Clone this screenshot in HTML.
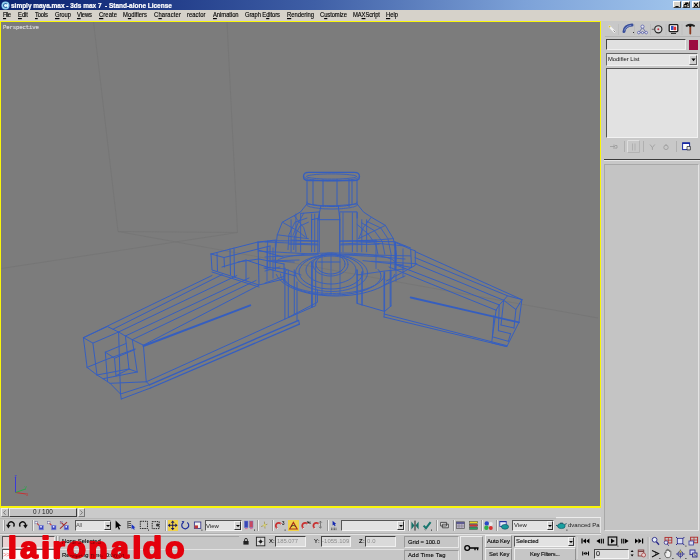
<!DOCTYPE html>
<html>
<head>
<meta charset="utf-8">
<title>simply maya.max - 3ds max 7 - Stand-alone License</title>
<style>
html,body{margin:0;padding:0;}
body{width:700px;height:560px;overflow:hidden;position:relative;background:#c6c6c6;font-family:"Liberation Sans",sans-serif;font-size:7px;color:#000;}
.a{position:absolute;}
.t{position:absolute;white-space:nowrap;line-height:1;will-change:transform;}
#title{left:0;top:0;width:700px;height:9.5px;background:linear-gradient(90deg,#0c2470 0%,#1a3482 18%,#3f5fa6 45%,#7da2d8 75%,#a4c8ee 100%);}
#title .t{color:#fff;-webkit-text-stroke:0.2px #fff;font-weight:bold;font-size:7.6px;left:11px;top:1px;}
#menu{left:0;top:9.5px;width:700px;height:11.5px;background:#d6d2ca;}
#menu .t{color:#000;transform:scaleY(1.16);transform-origin:0 84%;-webkit-text-stroke:0.12px #000;}
#menu u{text-decoration-thickness:0.6px;text-underline-offset:0.6px;}
#vp{left:0;top:20.5px;width:601px;height:487px;background:#faf60a;}
#vpi{left:1.3px;top:1.4px;width:598.3px;height:484.3px;background:#7c7c7c;}
.sunk{box-sizing:border-box;border:1px solid;border-color:#555 #f4f4f4 #f4f4f4 #555;background:#e2e2e2;}
.btn{box-sizing:border-box;border:1px solid;border-color:#f0f0f0 #666 #666 #f0f0f0;background:#c6c6c6;}
.wb{box-sizing:border-box;background:#d6d2ca;border:0.6px solid;border-color:#fff #404040 #404040 #fff;}
.dd{background:#e2e2e2;border-color:#555 #f4f4f4 #f4f4f4 #555;}
.ddb{background:#d2d2d2;border-width:0.6px;border-color:#f4f4f4 #333 #333 #f4f4f4;}
.ddb::after{content:"";position:absolute;left:0.8px;top:2.8px;border:2.1px solid transparent;border-top:2.4px solid #000;border-bottom:0;}
.s1{font-size:6.3px;color:#000;-webkit-text-stroke:0.1px #000;}
.s2{font-size:6px;color:#8c8c8c;}
#ff+.s2{color:#222;-webkit-text-stroke:0.15px #222;}
.cf{background:#dadada;border-color:#444 #f0f0f0 #f0f0f0 #444;}
.sep{position:absolute;width:1px;background:#9a9a9a;box-shadow:1px 0 0 #eee;}
</style>
</head>
<body>
<!-- title bar -->
<div id="title" class="a">
  <svg class="a" style="left:1px;top:0.5px" width="9" height="9" viewBox="0 0 9 9"><circle cx="4.5" cy="4.5" r="4" fill="#8fd0f0"/><circle cx="4.5" cy="4.5" r="2.6" fill="#e8f6ff"/><path d="M6 3.2A2 2 0 1 0 6 5.8" stroke="#2a6aa8" stroke-width="1.1" fill="none"/></svg>
  <span class="t" style="left:11.0px;top:2.5px;font-size:6.50px;letter-spacing:-0.02px;">simply maya.max - 3ds max 7&nbsp; - Stand-alone License</span>
  <div class="a wb" style="left:673px;top:1.2px;width:8.4px;height:7.2px"></div>
  <div class="a wb" style="left:681.6px;top:1.2px;width:8.4px;height:7.2px"></div>
  <div class="a wb" style="left:691.8px;top:1.2px;width:8.2px;height:7.2px"></div>
  <svg class="a" style="left:673px;top:0" width="27" height="10" viewBox="673 0 27 10"><path d="M675.4 6.6h3.2" stroke="#000" stroke-width="1.1"/><path d="M685.2 3.4h3v2.6M684 4.6h2.8v2.4h-2.8z" stroke="#000" stroke-width="0.9" fill="none"/><path d="M684 4.5h2.8M685.2 3.2h3" stroke="#000" stroke-width="1.2"/><path d="M694.2 2.8l3.6 4M697.8 2.8l-3.6 4" stroke="#000" stroke-width="1.1"/></svg>
</div>
<!-- menu bar -->
<div id="menu" class="a">
  <span class="t" style="left:3.0px;top:3.2px;font-size:5.85px;letter-spacing:-0.48px;"><u>F</u>ile</span>
  <span class="t" style="left:18.0px;top:3.2px;font-size:5.85px;letter-spacing:-0.03px;"><u>E</u>dit</span>
  <span class="t" style="left:35.0px;top:3.2px;font-size:5.85px;letter-spacing:-0.17px;"><u>T</u>ools</span>
  <span class="t" style="left:55.0px;top:3.2px;font-size:5.85px;letter-spacing:-0.07px;"><u>G</u>roup</span>
  <span class="t" style="left:77.0px;top:3.2px;font-size:5.85px;letter-spacing:-0.13px;"><u>V</u>iews</span>
  <span class="t" style="left:99.0px;top:3.2px;font-size:5.85px;letter-spacing:0.09px;"><u>C</u>reate</span>
  <span class="t" style="left:123.0px;top:3.2px;font-size:5.85px;letter-spacing:0.03px;">M<u>o</u>difiers</span>
  <span class="t" style="left:154.0px;top:3.2px;font-size:5.85px;letter-spacing:0.16px;">C<u>h</u>aracter</span>
  <span class="t" style="left:187.0px;top:3.2px;font-size:5.85px;letter-spacing:0.05px;">reactor</span>
  <span class="t" style="left:213.0px;top:3.2px;font-size:5.85px;letter-spacing:-0.05px;"><u>A</u>nimation</span>
  <span class="t" style="left:245.0px;top:3.2px;font-size:5.85px;letter-spacing:-0.09px;">Graph E<u>d</u>itors</span>
  <span class="t" style="left:287.0px;top:3.2px;font-size:5.85px;"><u>R</u>endering</span>
  <span class="t" style="left:320.0px;top:3.2px;font-size:5.85px;letter-spacing:-0.08px;">C<u>u</u>stomize</span>
  <span class="t" style="left:353.0px;top:3.2px;font-size:5.85px;letter-spacing:-0.08px;">MA<u>X</u>Script</span>
  <span class="t" style="left:386.0px;top:3.2px;font-size:5.85px;letter-spacing:-0.02px;"><u>H</u>elp</span>
</div>
<!-- viewport -->
<div id="vp" class="a"><div id="vpi" class="a"></div></div>
<span class="t" style="left:3.0px;top:25.2px;font-size:5.70px;letter-spacing:-0.16px;font-family:'Liberation Mono',monospace;color:#dcdcdc;-webkit-text-stroke:0.15px #dcdcdc">Perspective</span>
<svg id="wire" class="a" style="left:0;top:0" width="700" height="560" viewBox="0 0 700 560">
<g stroke="#727272" stroke-width="0.7" fill="none" opacity="0.9">
<path d="M93.5 22L118 231.5M227 22L237.5 232.5M118 231.5L598 318M237.5 232.5L1.5 268.5M118 231.5L237.5 232.5"/>
</g>
<g fill="none" stroke="#2a5acc" stroke-linecap="round" stroke-linejoin="round" opacity="0.85">
<path d="M83.4 337.7 L107.4 326.5 L118.6 332.0 L92.9 343.1 L83.4 337.7M118.6 332.0 L125.4 336.0 L132.3 339.7 L143.4 345.2M83.4 337.7 L87.1 367.4M92.9 343.1 L97.0 375.0M87.1 367.4 L97.0 375.0 L103.0 378.7 L110.0 383.3 L120.5 394.0 L121.3 399.0M143.4 345.2 L146.3 381.8 L149.4 384.8M120.5 394.0 L149.4 384.8M121.3 399.0 L150.5 388.0M118.6 332.0 L120.5 394.0M125.4 336.0 L129.0 369.0M132.3 339.7 L137.2 372.0M105.3 352.2 L114.5 358.2 L116.0 375.7M105.3 352.2 L107.6 381.8M114.5 358.2 L135.0 349.5M105.3 352.2 L126.0 343.5M87.1 367.4 L105.0 360.0 L135.0 349.0M97.0 375.0 L129.0 369.0M103.0 378.7 L137.2 372.0M110.0 383.3 L146.3 381.8M129.0 369.0 L137.2 372.0M116.0 375.7 L129.0 369.0M83.4 337.7 L212.0 275.5M113.0 329.2 L222.3 274.5M118.6 332.0 L236.8 275.6M125.4 336.0 L249.0 278.0M132.3 339.7 L256.0 280.5M143.4 345.2 L258.7 285.4M298.6 320.3 L299.4 324.2M146.3 381.8 L284.9 319.1M297.0 282.0 L297.0 320.3M211.0 254.0 L212.0 270.0 L259.0 285.0 L258.0 242.0 L211.0 254.0M212.0 272.0 L259.0 287.0M258.0 242.0 L276.0 240.0M217.0 252.5 L217.5 271.0M230.0 249.0 L230.5 275.0M234.0 248.0 L234.5 276.5M222.0 267.0 L246.0 260.0 L270.0 268.0M238.0 262.0 L259.0 259.0M246.0 260.0 L246.0 281.0M259.0 259.0 L284.0 264.0M211.0 254.0 L224.0 257.5 L270.0 246.0M224.0 257.5 L224.5 267.0M259.0 285.0 L284.0 279.0M258.0 242.0 L258.0 250.0 L283.0 257.0M284.9 268.0 L284.9 319.1 L315.7 305.7 L315.7 262.0M288.3 270.0 L288.3 317.4 L317.4 302.3 L317.4 290.0M312.3 262.0 L312.3 307.0M357.0 270.0 L357.0 303.4 L384.6 311.4 L384.6 272.0M362.0 272.0 L362.0 305.0M391.0 270.0 L391.0 306.0M384.6 311.4 L391.0 306.0M384.0 314.0 L507.0 345.7M384.0 317.0 L506.8 346.6M384.6 311.4 L384.0 317.0M395.5 242.5 L410.7 249.3 L415.3 250.8 L415.3 265.2 L411.5 267.5 L410.7 249.3M411.5 267.5 L386.4 281.0M395.5 242.5 L395.5 264.5M395.5 264.5 L411.5 267.5M415.3 251.6 L521.9 299.6M415.0 257.6 L507.5 295.8M415.0 263.7 L503.7 300.3M395.5 264.5 L400.0 266.5 L499.2 304.9M389.0 267.0 L496.1 310.2M521.9 299.6 L507.5 295.8 L503.7 300.3 L499.2 304.9 L496.1 310.2M521.9 299.6 L518.9 322.4 L506.8 346.6 L491.6 342.8 L496.1 310.2M492.4 336.8 L508.3 341.3M498.4 330.7 L510.6 333.7M501.0 325.0 L514.0 328.0M499.2 304.9 L498.4 330.7M503.7 300.3 L501.0 325.0M515.9 309.5 L514.0 328.0M503.7 300.3 L515.9 309.5 L521.9 299.6M510.6 333.7 L508.3 341.3M494.0 315.7 L492.4 336.8M307.0 179.5 L307.0 204.0M313.0 179.5 L313.0 204.0M323.0 179.5 L323.0 206.5M337.0 179.5 L337.0 206.5M349.0 179.5 L349.0 206.5M352.0 179.5 L352.0 204.0M357.0 179.5 L357.0 204.0M357.0 202.0 L356.9 202.4 L356.7 202.7 L356.3 203.1 L355.8 203.4 L355.1 203.7 L354.3 204.0 L353.3 204.4 L352.2 204.6 L351.0 204.9 L349.7 205.2 L348.2 205.4 L346.7 205.6 L345.1 205.8 L343.3 206.0 L341.6 206.2 L339.7 206.3 L337.8 206.4 L335.9 206.4 L334.0 206.5 L332.0 206.5 L330.0 206.5 L328.1 206.4 L326.2 206.4 L324.3 206.3 L322.4 206.2 L320.7 206.0 L318.9 205.8 L317.3 205.6 L315.8 205.4 L314.3 205.2 L313.0 204.9 L311.8 204.6 L310.7 204.4 L309.7 204.0 L308.9 203.7 L308.2 203.4 L307.7 203.1 L307.3 202.7 L307.1 202.4 L307.0 202.0M357.1 204.0 L363.4 211.9 L371.3 217.2 L385.4 225.4 L393.3 238.6 L396.4 254.3 L395.5 270.0M306.9 204.0 L300.6 211.9 L293.7 215.9 L282.3 222.2 L277.3 234.8 L275.4 251.1 L275.4 270.0M300.6 213.4 L319.4 211.9 L319.4 218.1 L311.6 219.7M339.8 211.9 L357.1 211.9 L357.1 218.1M291.1 240.1 L317.9 241.1M339.8 241.1 L376.0 240.1M258.1 242.3 L275.4 240.8 L317.9 241.1M339.8 241.1 L394.8 241.7 L410.6 248.0M321.0 205.6 L317.9 219.7 L317.9 254.3M338.3 205.6 L339.8 219.7 L339.8 254.3M317.9 219.7 L339.8 219.7M345.0 264.0 L344.8 265.6 L344.3 267.1 L343.4 268.5 L342.2 269.9 L340.8 271.1 L339.0 272.1 L337.1 272.9 L335.0 273.5 L332.8 273.9 L330.5 274.0 L328.2 273.9 L326.0 273.5 L323.9 272.9 L322.0 272.1 L320.2 271.1 L318.8 269.9 L317.6 268.5 L316.7 267.1 L316.2 265.6 L316.0 264.0 L316.2 262.4 L316.7 260.9 L317.6 259.5 L318.8 258.1 L320.2 256.9 L322.0 255.9 L323.9 255.1 L326.0 254.5 L328.2 254.1 L330.5 254.0 L332.8 254.1 L335.0 254.5 L337.1 255.1 L339.0 255.9 L340.8 256.9 L342.2 258.1 L343.4 259.5 L344.3 260.9 L344.8 262.4 L345.0 264.0M363.0 272.0 L362.6 274.7 L361.4 277.3 L359.5 279.7 L356.9 282.0 L353.6 284.0 L349.8 285.8 L345.5 287.1 L340.9 288.2 L336.0 288.8 L331.0 289.0 L326.0 288.8 L321.1 288.2 L316.5 287.1 L312.2 285.8 L308.4 284.0 L305.1 282.0 L302.5 279.7 L300.6 277.3 L299.4 274.7 L299.0 272.0 L299.4 269.3 L300.6 266.7 L302.5 264.3 L305.1 262.0 L308.4 260.0 L312.2 258.2 L316.5 256.9 L321.1 255.8 L326.0 255.2 L331.0 255.0 L336.0 255.2 L340.9 255.8 L345.5 256.9 L349.8 258.2 L353.6 260.0 L356.9 262.0 L359.5 264.3 L361.4 266.7 L362.6 269.3 L363.0 272.0M378.1 269.5 L379.5 271.2 L380.4 273.0 L380.9 274.8 L381.0 276.7 L380.6 278.5 L379.8 280.3 L378.5 282.0 L376.8 283.7 L374.7 285.4 L372.2 286.9 L369.4 288.3 L366.2 289.7 L362.7 290.9 L358.9 291.9 L354.9 292.9 L350.7 293.6 L346.3 294.2 L341.8 294.7 L337.1 294.9 L332.5 295.0 L327.9 294.9 L323.2 294.7 L318.7 294.2 L314.3 293.6 L310.1 292.9 L306.1 291.9 L302.3 290.9 L298.8 289.7 L295.6 288.3 L292.8 286.9 L290.3 285.4 L288.2 283.7 L286.5 282.0 L285.2 280.3 L284.4 278.5 L284.0 276.7 L284.1 274.8 L284.6 273.0 L285.5 271.2 L286.9 269.5M394.6 274.5 L393.7 276.3 L392.6 278.0 L391.1 279.7 L389.4 281.4 L387.5 283.0 L385.2 284.5 L382.8 286.0 L380.1 287.4 L377.2 288.7 L374.1 289.9 L370.8 291.0 L367.3 292.0 L363.7 293.0 L359.9 293.8 L356.0 294.4 L352.0 295.0 L348.0 295.4 L343.9 295.7 L339.7 295.9 L335.5 296.0 L331.3 295.9 L327.1 295.7 L323.0 295.4 L319.0 295.0 L315.0 294.4 L311.1 293.8 L307.3 293.0 L303.7 292.0 L300.2 291.0 L296.9 289.9 L293.8 288.7 L290.9 287.4 L288.2 286.0 L285.8 284.5 L283.5 283.0 L281.6 281.4 L279.9 279.7 L278.4 278.0 L277.3 276.3 L276.4 274.5M284.0 264.0 L284.0 282.0M264.0 268.0 L296.0 276.0M270.0 246.0 L270.0 268.0M317.9 262.0 L339.9 262.0M294.3 270.0 L294.3 314.0M311.6 262.0 L311.6 307.0M357.2 270.0 L357.2 303.4M362.0 272.0 L362.0 305.0M384.0 272.0 L384.0 311.0M390.2 270.0 L390.2 306.0" stroke-width="1.0"/>
<path d="M143.4 346.0 L250.2 305.3M410.7 297.5 L518.9 322.4" stroke-width="1.9"/>
<path d="M149.4 384.8 L298.6 320.3M150.5 388.0 L299.4 324.2M308.5 172.3H354.5Q359.5 172.3 359.5 176.4Q359.5 180.5 354.5 180.5H308.5Q303.5 180.5 303.5 176.4Q303.5 172.3 308.5 172.3Z" stroke-width="1.3"/>
<path d="M356.5 176.5 L356.2 176.9 L355.3 177.3 L353.8 177.7 L351.7 178.0 L349.2 178.3 L346.2 178.6 L342.8 178.8 L339.2 179.0 L335.4 179.1 L331.5 179.1 L327.6 179.1 L323.8 179.0 L320.2 178.8 L316.8 178.6 L313.8 178.3 L311.3 178.0 L309.2 177.7 L307.7 177.3 L306.8 176.9 L306.5 176.5 L306.8 176.1 L307.7 175.7 L309.2 175.3 L311.3 175.0 L313.8 174.7 L316.8 174.4 L320.2 174.2 L323.8 174.0 L327.6 173.9 L331.5 173.9 L335.4 173.9 L339.2 174.0 L342.8 174.2 L346.2 174.4 L349.2 174.7 L351.7 175.0 L353.8 175.3 L355.3 175.7 L356.2 176.1 L356.5 176.5M357.5 204.5 L357.4 204.9 L357.2 205.2 L356.8 205.6 L356.3 205.9 L355.6 206.2 L354.7 206.5 L353.7 206.9 L352.6 207.1 L351.4 207.4 L350.0 207.7 L348.6 207.9 L347.0 208.1 L345.3 208.3 L343.6 208.5 L341.8 208.7 L339.9 208.8 L338.0 208.9 L336.0 208.9 L334.0 209.0 L332.0 209.0 L330.0 209.0 L328.0 208.9 L326.0 208.9 L324.1 208.8 L322.2 208.7 L320.4 208.5 L318.7 208.3 L317.0 208.1 L315.4 207.9 L314.0 207.7 L312.6 207.4 L311.4 207.1 L310.3 206.9 L309.3 206.5 L308.4 206.2 L307.7 205.9 L307.2 205.6 L306.8 205.2 L306.6 204.9 L306.5 204.5M366.6 221.3 L380.7 227.9 L387.9 238.6 L391.1 254.3 L390.4 268.4M361.8 222.9 L374.4 230.7 L382.3 241.7 L384.8 254.3M357.1 224.4 L368.1 233.9 L376.0 244.9 L377.9 254.3M306.9 218.1 L294.9 222.2 L288.9 234.8 L288.0 249.6M308.4 222.2 L299.9 226.0 L294.3 237.0 L293.7 249.6M303.7 213.4 L298.1 222.9 L293.0 235.4M294.3 215.9 L303.7 227.6 L306.9 238.6M282.3 222.2 L297.4 230.7 L305.3 237.0M277.3 234.8 L294.3 237.0 L308.4 238.6M371.3 217.2 L363.4 227.6 L358.7 238.6M385.4 225.4 L371.3 232.3 L358.7 238.6M393.3 238.6 L376.0 240.1 L358.7 241.1M291.1 219.7 L291.1 251.8M295.9 214.1 L295.9 251.8M300.6 214.1 L300.6 251.8M311.6 214.1 L311.6 251.8M314.7 214.1 L314.7 251.8M319.4 214.1 L319.4 251.8M339.8 212.8 L339.8 251.8M343.0 212.8 L343.0 251.8M352.4 212.8 L352.4 251.8M357.1 212.8 L357.1 251.8M361.8 219.7 L361.8 251.8M366.6 219.7 L366.6 251.8M311.6 219.7 L311.6 238.6M288.9 244.2 L317.9 244.9M339.8 244.9 L379.1 244.2M267.6 241.1 L267.6 268.4M275.4 240.8 L275.4 270.0M376.0 240.1 L376.0 268.4M394.8 241.7 L394.8 270.0M258.1 251.1 L317.9 254.3M339.8 254.3 L410.6 255.9M267.6 260.6 L294.3 262.1M371.3 261.2 L416.8 263.7M321.0 205.6 L338.3 205.6M306.9 204.0 L321.0 205.6M357.1 204.0 L338.3 205.6M348.0 264.5 L347.8 266.3 L347.1 268.1 L346.1 269.7 L344.7 271.3 L342.9 272.6 L340.8 273.8 L338.4 274.7 L335.9 275.4 L333.2 275.9 L330.5 276.0 L327.8 275.9 L325.1 275.4 L322.6 274.7 L320.2 273.8 L318.1 272.6 L316.3 271.3 L314.9 269.7 L313.9 268.1 L313.2 266.3 L313.0 264.5 L313.2 262.7 L313.9 260.9 L314.9 259.3 L316.3 257.7 L318.1 256.4 L320.2 255.2 L322.6 254.3 L325.1 253.6 L327.8 253.1 L330.5 253.0 L333.2 253.1 L335.9 253.6 L338.4 254.3 L340.8 255.2 L342.9 256.4 L344.7 257.7 L346.1 259.3 L347.1 260.9 L347.8 262.7 L348.0 264.5M356.0 270.0 L355.7 272.2 L354.8 274.3 L353.3 276.4 L351.2 278.2 L348.7 279.9 L345.7 281.3 L342.3 282.5 L338.7 283.3 L334.9 283.8 L331.0 284.0 L327.1 283.8 L323.3 283.3 L319.7 282.5 L316.3 281.3 L313.3 279.9 L310.8 278.2 L308.7 276.4 L307.2 274.3 L306.3 272.2 L306.0 270.0 L306.3 267.8 L307.2 265.7 L308.7 263.6 L310.8 261.8 L313.3 260.1 L316.3 258.7 L319.7 257.5 L323.3 256.7 L327.1 256.2 L331.0 256.0 L334.9 256.2 L338.7 256.7 L342.3 257.5 L345.7 258.7 L348.7 260.1 L351.2 261.8 L353.3 263.6 L354.8 265.7 L355.7 267.8 L356.0 270.0M367.5 273.0 L367.1 275.9 L365.7 278.7 L363.6 281.4 L360.6 283.9 L357.0 286.1 L352.7 288.0 L347.8 289.5 L342.6 290.6 L337.1 291.3 L331.5 291.5 L325.9 291.3 L320.4 290.6 L315.2 289.5 L310.3 288.0 L306.0 286.1 L302.4 283.9 L299.4 281.4 L297.3 278.7 L295.9 275.9 L295.5 273.0 L295.9 270.1 L297.3 267.3 L299.4 264.6 L302.4 262.1 L306.0 259.9 L310.3 258.0 L315.2 256.5 L320.4 255.4 L325.9 254.7 L331.5 254.5 L337.1 254.7 L342.6 255.4 L347.8 256.5 L352.7 258.0 L357.0 259.9 L360.6 262.1 L363.6 264.6 L365.7 267.3 L367.1 270.1 L367.5 273.0M384.5 274.0 L384.3 275.5 L383.9 277.1 L383.1 278.6 L382.0 280.0 L380.5 281.5 L378.8 282.9 L376.8 284.2 L374.6 285.5 L372.0 286.7 L369.3 287.8 L366.3 288.8 L363.1 289.8 L359.7 290.6 L356.1 291.4 L352.4 292.0 L348.6 292.5 L344.6 293.0 L340.6 293.3 L336.6 293.4 L332.5 293.5 L328.4 293.4 L324.4 293.3 L320.4 293.0 L316.4 292.5 L312.6 292.0 L308.9 291.4 L305.3 290.6 L301.9 289.8 L298.7 288.8 L295.7 287.8 L293.0 286.7 L290.4 285.5 L288.2 284.2 L286.2 282.9 L284.5 281.5 L283.0 280.0 L281.9 278.6 L281.1 277.1 L280.7 275.5 L280.5 274.0M276.5 262.0 L276.7 261.3 L277.2 260.6 L278.1 259.9 L279.4 259.2 L281.0 258.6 L282.9 257.9 L285.2 257.3 L287.8 256.7 L290.6 256.2 L293.8 255.6 L297.2 255.2 L300.8 254.7 L304.7 254.3 L308.7 254.0 L312.9 253.7 L317.3 253.4 L321.7 253.2 L326.3 253.1 L330.9 253.0 L335.5 253.0 L340.1 253.0 L344.7 253.1 L349.3 253.2 L353.7 253.4 L358.1 253.7 L362.3 254.0 L366.3 254.3 L370.2 254.7 L373.8 255.2 L377.2 255.6 L380.4 256.2 L383.2 256.7 L385.8 257.3 L388.1 257.9 L390.0 258.6 L391.6 259.2 L392.9 259.9 L393.8 260.6 L394.3 261.3 L394.5 262.0M265.0 242.0 L289.0 243.0 L317.0 244.0M341.0 244.0 L369.0 242.6 L405.0 246.0M265.0 257.0 L284.0 256.0 L316.0 255.0M345.0 255.0 L377.0 256.6 L405.0 259.0M269.0 261.0 L299.0 260.0M363.0 260.6 L403.0 265.0M265.0 267.0 L285.0 269.0 L301.0 275.0M357.0 275.0 L385.0 271.0 L405.0 269.0M267.0 247.0 L267.0 281.0M273.0 248.0 L273.0 278.0M403.0 249.0 L403.0 277.0M396.0 247.0 L396.0 281.0M265.0 283.0 L285.0 276.0M265.0 271.0 L280.0 267.0M385.0 285.0 L405.0 276.0" stroke-width="0.9"/>
<path d="M358.5 177.0 L358.4 177.3 L358.2 177.6 L357.8 177.9 L357.2 178.2 L356.4 178.5 L355.6 178.8 L354.5 179.1 L353.3 179.4 L352.0 179.6 L350.6 179.8 L349.0 180.0 L347.4 180.2 L345.6 180.4 L343.8 180.6 L341.8 180.7 L339.8 180.8 L337.8 180.9 L335.7 181.0 L333.6 181.0 L331.5 181.0 L329.4 181.0 L327.3 181.0 L325.2 180.9 L323.2 180.8 L321.2 180.7 L319.2 180.6 L317.4 180.4 L315.6 180.2 L314.0 180.0 L312.4 179.8 L311.0 179.6 L309.7 179.4 L308.5 179.1 L307.4 178.8 L306.6 178.5 L305.8 178.2 L305.2 177.9 L304.8 177.6 L304.6 177.3 L304.5 177.0M322.0 254.0 L322.0 294.0M331.0 254.0 L331.0 294.0M340.0 254.0 L340.0 294.0" stroke-width="0.8"/>
</g>
<g fill="none" stroke-width="1">
<path d="M15.5 492.5V477" stroke="#3a3ad8"/><path d="M15.5 492.5L26 494" stroke="#c83030"/><path d="M15.5 492.5L25.5 489" stroke="#28a848"/>
<text x="14.6" y="478" font-family="Liberation Sans, sans-serif" font-size="4.5" fill="#3a3ad8" stroke="none">z</text>
<text x="24.5" y="489" font-family="Liberation Sans, sans-serif" font-size="4.5" fill="#28a848" stroke="none">y</text>
<text x="26" y="496" font-family="Liberation Sans, sans-serif" font-size="4.5" fill="#c83030" stroke="none">x</text>
</g>
</svg>
<!-- right panel -->
<div id="rp" class="a" style="left:601px;top:21px;width:99px;height:513px;background:#c8c8c8">
  <!-- tabs: coords relative to rp (x-601, y-21) -->
  <div class="a" style="left:4px;top:2px;width:95px;height:13px;border-bottom:1px solid #b4b4b4"></div>
  <svg class="a" style="left:0;top:0" width="99" height="140" viewBox="601 21 99 140">
    <!-- tab separators -->
    <g stroke="#b4b4b4" stroke-width="0.5"><path d="M618.5 24v11M634.5 24v11M650.5 24v11M666 24v11M682 24v11"/></g>
    <!-- create (cursor/star) -->
    <path d="M609.5 26.5l5 5.2" stroke="#f4f4f4" stroke-width="2.2" stroke-linecap="round"/><path d="M609 26l1.2 1.2" stroke="#d8c040" stroke-width="1.5"/><path d="M613.5 30.5l1.6 1.6" stroke="#8a8a8a" stroke-width="1"/>
    <!-- modify (blue arc) -->
    <path d="M624 31.5q0.5-6 8-6.5" stroke="#3a4f9a" stroke-width="3" fill="none" stroke-linecap="round"/><path d="M624.6 30.5q1-4.4 6.6-5" stroke="#8da0d8" stroke-width="0.9" fill="none"/><rect x="633" y="32" width="1" height="1" fill="#333"/>
    <!-- hierarchy --><g transform="translate(-3,0)">
    <g stroke="#5a62a8" stroke-width="0.8" fill="#e4e4f0"><path d="M645.5 27.5l-3.6 5h7.2z" fill="none"/><circle cx="645.5" cy="26.6" r="1.6"/><circle cx="641.8" cy="32.6" r="1.3"/><circle cx="649.2" cy="32.6" r="1.3"/><circle cx="645.5" cy="32.6" r="1.1"/></g></g>
    <!-- motion --><g transform="translate(-2.2,0)">
    <circle cx="660.5" cy="29.3" r="3.6" stroke="#222" stroke-width="1.1" fill="#d8d8d8"/><circle cx="660.5" cy="29.3" r="1" fill="#c03040"/><path d="M654 29.3h3" stroke="#555" stroke-width="0.8"/></g>
    <!-- display --><g transform="translate(-3,0)">
    <rect x="672.2" y="24.6" width="8.6" height="7" rx="0.8" fill="#fff" stroke="#1a1a1a" stroke-width="1.3"/><rect x="674" y="26" width="2.6" height="4" fill="#3050c0"/><rect x="676.6" y="26.6" width="2.6" height="3.6" fill="#e03030"/><path d="M674 33.4h5" stroke="#222" stroke-width="1"/></g>
    <!-- utilities (hammer) --><g transform="translate(-2,0)">
    <path d="M688.6 25.8q3.6-2 7.4 0" stroke="#222" stroke-width="2" fill="none" stroke-linecap="round"/><path d="M692.3 26.5v7" stroke="#8a3a20" stroke-width="1.8" stroke-linecap="round"/><path d="M692.3 25v2" stroke="#111" stroke-width="2"/></g>
    <!-- stack buttons row -->
    <g stroke="#9a9a9a" stroke-width="0.8" fill="none">
      <path d="M610 146.5h5M614 144.5v4.5M615 145.5h2v2.6h-2"/>
      <path d="M624.5 141v11M643.5 141v11M676.5 141v11" stroke="#aaa"/>
      <rect x="627.5" y="140.5" width="12" height="12" stroke="#b0b0b0"/><path d="M627.5 152.5v-12h12" stroke="#e8e8e8"/>
      <path d="M632.5 143.5v7M635 143.5v7" stroke="#aaa"/>
      <path d="M650 144.5l2.4 3 2.4-3M652.4 147.5v2.4" />
      <circle cx="666" cy="147.4" r="2.2"/><path d="M666 144v1.4"/>
    </g>
    <rect x="682.6" y="143" width="7" height="6.6" fill="#fff" stroke="#1828a0" stroke-width="1"/><path d="M682.4 143.2h7.4" stroke="#1828a0" stroke-width="1.6"/><path d="M687 146.5h3.4v3.4h-3.4z" fill="#e8e8e8" stroke="#222" stroke-width="0.7"/>
  </svg>
  <!-- name field -->
  <div class="a sunk" style="left:4.5px;top:18px;width:80px;height:11px;border-color:#444 #f0f0f0 #f0f0f0 #444;background:#e0e0e0"></div>
  <div class="a" style="left:87.5px;top:18.5px;width:9px;height:10.5px;background:#9c0a40"></div>
  <!-- modifier list -->
  <div class="a sunk" style="left:4.5px;top:32px;width:92px;height:12.5px;border-color:#666 #f0f0f0 #f0f0f0 #666;background:#e4e4e4"></div>
  <span class="t" style="left:6.7px;top:35.6px;font-size:5.84px;color:#111">Modifier List</span>
  <div class="a btn" style="left:88px;top:33.5px;width:7.5px;height:10px;background:#d0d0d0"></div>
  <svg class="a" style="left:89.5px;top:37px" width="5" height="4" viewBox="0 0 5 4"><path d="M0.4 0.6h4.2l-2.1 2.6z" fill="#000"/></svg>
  <!-- stack list -->
  <div class="a sunk" style="left:4.5px;top:47px;width:92px;height:69.5px;border-color:#555 #f2f2f2 #f2f2f2 #555;background:#e2e2e2"></div>
  <!-- divider -->
  <div class="a" style="left:3px;top:138px;width:96px;height:1px;background:#3c3c3c"></div>
  <div class="a" style="left:3px;top:139px;width:96px;height:1px;background:#e6e6e6"></div>
  <!-- rollout area -->
  <div class="a" style="box-sizing:border-box;left:3px;top:142.5px;width:94.5px;height:367.5px;background:#c4c4c4;border:1px solid;border-color:#a8a8a8 #e4e4e4 #e4e4e4 #a8a8a8"></div>
</div>
<!-- bottom -->
<div id="bot" class="a" style="left:0;top:507.5px;width:601px;height:52.5px;background:#c6c6c6"></div>
<!-- time slider (page coords) -->
<div class="a" style="left:0;top:507.5px;width:601px;height:10px;background:#cacaca"></div>
<div class="a" style="left:1px;top:508px;width:7.5px;height:9px;background:#c8c8c8;box-sizing:border-box;border:0.6px solid;border-color:#eee #777 #777 #eee"></div>
<div class="a" style="left:8.5px;top:508px;width:68.5px;height:9px;background:#c4c4c4;box-sizing:border-box;border:1px solid;border-color:#e8e8e8 #3a3a3a #3a3a3a #e8e8e8"></div>
<div class="a" style="left:77.5px;top:508px;width:7.5px;height:9px;background:#c8c8c8;box-sizing:border-box;border:0.6px solid;border-color:#eee #777 #777 #eee"></div>
<span class="t" style="left:33.4px;top:509.4px;font-size:6.40px;letter-spacing:0.04px;color:#222">0 / 100</span>
<svg class="a" style="left:0;top:507" width="90" height="12" viewBox="0 507 90 12"><path d="M5.6 510.4l-2 2.2 2 2.2M80.4 510.4l2 2.2-2 2.2" stroke="#666" stroke-width="0.8" fill="none"/></svg>
<!-- main toolbar row -->
<div class="a" style="left:0;top:517.5px;width:556px;height:1px;background:#b8b8b8"></div>
<div class="a" style="left:556px;top:517.3px;width:44.5px;height:1px;background:#ececec"></div>
<div class="a" style="left:600px;top:518px;width:1px;height:15px;background:#e4e4e4"></div>
<div class="a" style="left:0;top:533.5px;width:601px;height:1px;background:#e4e4e4"></div>
<div class="a" style="left:0;top:532.8px;width:601px;height:0.8px;background:#b0b0b0"></div>
<div class="sep" style="left:3px;top:520px;height:11px;background:#eee;box-shadow:1px 0 0 #999"></div>
<div class="sep" style="left:31.5px;top:520px;height:11px"></div>
<div class="sep" style="left:164.5px;top:520px;height:11px"></div>
<div class="sep" style="left:256.5px;top:520px;height:11px"></div>
<div class="sep" style="left:272px;top:520px;height:11px"></div>
<div class="sep" style="left:326.5px;top:520px;height:11px"></div>
<div class="sep" style="left:407.5px;top:520px;height:11px"></div>
<div class="sep" style="left:436px;top:520px;height:11px"></div>
<div class="sep" style="left:452.5px;top:520px;height:11px"></div>
<div class="sep" style="left:480.5px;top:520px;height:11px"></div>
<div class="sep" style="left:496px;top:520px;height:11px"></div>
<!-- dropdowns -->
<div class="a sunk dd" style="left:74.5px;top:520px;width:36.5px;height:10.5px"></div>
<span class="t" style="left:76.0px;top:522.7px;font-size:5.70px;letter-spacing:-0.17px;color:#555">All</span>
<div class="a btn ddb" style="left:104px;top:521px;width:6.5px;height:8.5px"></div>
<div class="a sunk dd" style="left:204.5px;top:520px;width:37px;height:10.5px"></div>
<span class="t" style="left:206.0px;top:522.5px;font-size:6.00px;color:#1a1a1a">View</span>
<div class="a btn ddb" style="left:234px;top:521px;width:6.5px;height:8.5px"></div>
<div class="a sunk dd" style="left:340.5px;top:520px;width:64px;height:10.5px"></div>
<div class="a btn ddb" style="left:397px;top:521px;width:6.5px;height:8.5px"></div>
<div class="a sunk dd" style="left:511.5px;top:520px;width:42.5px;height:10.5px"></div>
<span class="t" style="left:513.5px;top:522.6px;font-size:5.95px;color:#1a1a1a">View</span>
<div class="a btn ddb" style="left:546.5px;top:521px;width:6.5px;height:8.5px"></div>
<span class="t" style="left:568.0px;top:522.8px;font-size:5.96px;color:#222">dvanced Pa</span>
<!-- highlighted buttons -->
<div class="a" style="left:167.5px;top:519.5px;width:10.5px;height:11.5px;background:#efd24a"></div>
<div class="a" style="left:288px;top:519.5px;width:10.5px;height:11.5px;background:#efd24a"></div>
<svg id="tbi" class="a" style="left:0;top:518px" width="601" height="16" viewBox="0 518 601 16">
<!-- undo / redo -->
<g fill="none" stroke="#111" stroke-width="1.5"><path d="M13.6 526.6a3 3 0 1 0-5.4-1.6"/><path d="M20.2 526.6a3 3 0 1 1 5.4-1.6"/></g>
<path d="M6 524.8l2.4 3.6 2.2-3.4z" fill="#111"/><path d="M27.8 524.8l-2.4 3.6-2.2-3.4z" fill="#111"/>
<!-- link / unlink / bind -->
<g id="lk"><rect x="35" y="521.6" width="2.4" height="2.2" fill="#f4f4f4" stroke="#6a6aa0" stroke-width="0.5"/><path d="M37 523.4l3 3" stroke="#c04040" stroke-width="1.1"/><rect x="39" y="525.4" width="4.4" height="4.4" fill="#3a44c0" stroke="#8088d8" stroke-width="0.6"/><rect x="40.2" y="526" width="1.6" height="1.6" fill="#e8e8ff"/></g>
<use href="#lk" x="12.6"/>
<use href="#lk" x="25.2"/><path d="M60 528.6l7-6.4" stroke="#a03030" stroke-width="1.1"/><path d="M60.4 522l3 2.4" stroke="#a03030" stroke-width="1"/>
<!-- select arrow -->
<path d="M115.6 520.4v8l1.9-1.7 1.4 3 1.2-0.6-1.4-2.9 2.5-0.2z" fill="#000"/>
<!-- select by name -->
<path d="M127.5 521.5h3.6M127.5 523.5h3.6M127.5 525.5h3.6M127.5 527.5h3.6" stroke="#555" stroke-width="1.1"/><path d="M127.8 521v7.6" stroke="#777" stroke-width="1.4"/><path d="M131.6 524.2v5l1.3-1 1 1.6 0.9-0.5-1-1.6 1.6-0.3z" fill="#1830c0"/>
<!-- rect region -->
<rect x="140.3" y="521.3" width="7.2" height="7.2" fill="none" stroke="#222" stroke-width="1" stroke-dasharray="1.4 0.9"/><rect x="148" y="529.6" width="1" height="1" fill="#222"/>
<!-- window crossing -->
<rect x="152.2" y="521.6" width="7" height="7" fill="none" stroke="#222" stroke-width="1" stroke-dasharray="1.4 0.9"/><circle cx="157.6" cy="525" r="1.6" fill="#333"/>
<!-- move -->
<g stroke="#15155c" stroke-width="0.9" fill="#15155c"><path d="M172.7 522.4v5.8M169.8 525.3h5.8"/><path d="M172.7 520.4l1.9 2.3h-3.8zM172.7 530.2l1.9-2.3h-3.8zM167.8 525.3l2.3-1.9v3.8zM177.6 525.3l-2.3-1.9v3.8z" stroke="none"/></g>
<!-- rotate -->
<path d="M187.2 522.4a3.5 3.5 0 1 1-4.4 0.4" fill="none" stroke="#1c2c9a" stroke-width="1.2"/><path d="M181.6 521l2.8 0.2-1 2.4z" fill="#1c2c9a"/>
<!-- scale -->
<rect x="194.4" y="522" width="6.4" height="6.4" fill="#f0f0f0" stroke="#3a3a8a" stroke-width="0.9"/><rect x="194.6" y="525.4" width="3.4" height="3" fill="#c03838"/><rect x="201.4" y="529.6" width="1" height="1" fill="#222"/>
<!-- pivot center -->
<rect x="244.4" y="521" width="3.6" height="6.6" fill="#3848b8" stroke="#7078c8" stroke-width="0.5"/><rect x="249.4" y="521" width="3.6" height="6.6" fill="#c84860" stroke="#7078c8" stroke-width="0.5"/><path d="M245 528.6h2.6M250 528.6h2.6" stroke="#d070a0" stroke-width="1"/><rect x="254" y="529.6" width="1" height="1" fill="#222"/>
<!-- manipulate -->
<path d="M261 526.6l6.4-2.4M264.4 521.6l0.6 7" stroke="#a8a068" stroke-width="1"/><circle cx="264.6" cy="525.2" r="1.2" fill="#d8d070"/>
<!-- snaps -->
<g id="mg"><path d="M277 528.2a3 3 0 1 1 4.2-4.2" fill="none" stroke="#c83030" stroke-width="1.8"/><path d="M276.6 527.8l1.2 1.2M280.8 523.6l1.2 1.2" stroke="#eee" stroke-width="1"/></g>
<text x="282" y="524.6" font-family="Liberation Sans, sans-serif" font-size="4.6" font-weight="bold" fill="#222">3</text><rect x="284.6" y="529.6" width="1" height="1" fill="#222"/>
<path d="M289.6 529l3.8-6.6 3.8 6.6z" fill="none" stroke="#a83018" stroke-width="1.1"/><path d="M291 526.6a3 3 0 0 1 4.6 0" fill="none" stroke="#222" stroke-width="0.8"/>
<use href="#mg" x="26.4"/><path d="M307 521.6l2.6 1.6" stroke="#222" stroke-width="1.1"/><text x="308" y="524" font-family="Liberation Sans, sans-serif" font-size="3.6" fill="#222">%</text>
<use href="#mg" x="37.6"/><path d="M320.4 521.4v6.4M319 522.6l1.4-1.4 1.4 1.4M319 526.8l1.4 1.4 1.4-1.4" stroke="#555" stroke-width="0.7" fill="none"/>
<!-- named selection -->
<path d="M332.6 520.8v4.8l1.2-0.9 0.9 1.6 0.9-0.5-0.9-1.5 1.5-0.3z" fill="#1428b0"/><path d="M331 528.2h5.6M331 529.6h5.6" stroke="#444" stroke-width="0.8" stroke-dasharray="1 0.5"/>
<!-- mirror -->
<path d="M411.4 521.4l3 4-3 4zM418.6 521.4l-3 4 3 4z" fill="#167068"/><path d="M415 520.6v10" stroke="#111" stroke-width="0.9"/>
<!-- align -->
<path d="M423.6 525.6l2.4 2.6 4.6-6" fill="none" stroke="#18766e" stroke-width="2"/><path d="M424 528.8l2 1.6" stroke="#888" stroke-width="0.8"/><rect x="431" y="529.6" width="1" height="1" fill="#222"/>
<!-- layers -->
<path d="M440.6 522.4h6v3.6h-6zM442.4 524.2h6v3.6h-6z" fill="#e0e0e0" stroke="#333" stroke-width="0.8"/>
<!-- curve editor -->
<rect x="456.4" y="521.8" width="8" height="6.8" fill="#b8b0c8" stroke="#555" stroke-width="0.7"/><path d="M456.4 523h8" stroke="#383880" stroke-width="1.4"/><path d="M459 523.6v5M461.8 523.6v5M456.4 526h8" stroke="#777" stroke-width="0.5"/>
<!-- schematic -->
<rect x="469.6" y="521.4" width="8" height="2.2" fill="#e8d820" stroke="#444" stroke-width="0.5"/><rect x="469.6" y="524.4" width="8" height="2" fill="#d83030" stroke="#444" stroke-width="0.5"/><rect x="469.6" y="527.2" width="8" height="2.2" fill="#28a060" stroke="#444" stroke-width="0.5"/>
<!-- material editor -->
<circle cx="486.8" cy="523.4" r="2.2" fill="#2848c8"/><circle cx="490.8" cy="524" r="2" fill="#e8e8e8"/><circle cx="486.4" cy="527.8" r="2.2" fill="#30b048"/><circle cx="490.8" cy="528" r="2" fill="#d83030"/>
<!-- render scene -->
<rect x="499.8" y="521.4" width="6.4" height="5" fill="#e8e8f8" stroke="#2030a0" stroke-width="0.8"/><path d="M499.8 521.6h6.4" stroke="#2030a0" stroke-width="1.2"/><ellipse cx="505" cy="526.8" rx="3.6" ry="2.4" fill="#189898" stroke="#0c4c5c" stroke-width="0.6"/>
<!-- quick render teapot -->
<ellipse cx="561.4" cy="526" rx="3.8" ry="2.6" fill="#18a0a0" stroke="#0c5060" stroke-width="0.6"/><path d="M556 525.2l2 1M565 524.4l1.6-0.8M560 523.2h3" stroke="#0c5060" stroke-width="0.9"/><rect x="566.4" y="529.6" width="1" height="1" fill="#222"/>
</svg>
<!-- status area -->
<div id="st" class="a" style="left:0;top:534.5px;width:700px;height:25.5px;background:#c6c6c6"></div>
<!-- mini listener -->
<div class="a" style="box-sizing:border-box;left:1.5px;top:535.5px;width:53px;height:12.5px;background:#e6d2d2;border:1px solid;border-color:#555 #eee #eee #555"></div>
<div class="a" style="box-sizing:border-box;left:1.5px;top:548.5px;width:53px;height:11.5px;background:#fbfbfb;border:1px solid;border-color:#555 #eee #eee #555"></div>
<span class="t" style="left:2.5px;top:551.5px;font-size:6.4px;color:#e86a6a;letter-spacing:-0.4px">&gt;&gt;&gt;</span>
<div class="a" style="left:56px;top:535.5px;width:1px;height:24.5px;background:#9a9a9a;box-shadow:1px 0 0 #e8e8e8"></div>
<!-- status text rows -->
<div class="a" style="box-sizing:border-box;left:58.5px;top:536px;width:180px;height:12px;border-top:1px solid #a4a4a4;border-left:1px solid #a4a4a4"></div>
<div class="a" style="left:58.5px;top:549.2px;width:345px;height:1.3px;background:#e2e2e2"></div>
<span class="t s1" style="left:62.0px;top:538.8px;font-size:5.90px;letter-spacing:0.02px;">None Selected</span>
<span class="t s1" style="left:62.0px;top:552.8px;font-size:5.90px;letter-spacing:-0.07px;">Rendering Time&nbsp; 0:00:01</span>
<!-- coordinate fields -->
<span class="t s1" style="left:269.0px;top:538.8px;font-size:5.90px;letter-spacing:0.02px;">X:</span>
<div class="a sunk cf" style="left:275px;top:536.3px;width:31px;height:11px"></div>
<span class="t s2" style="left:277.0px;top:538.8px;font-size:5.90px;letter-spacing:-0.06px;">185.077</span>
<span class="t s1" style="left:314.0px;top:538.8px;font-size:5.90px;letter-spacing:0.35px;">Y:</span>
<div class="a sunk cf" style="left:320.5px;top:536.3px;width:30px;height:11px"></div>
<span class="t s2" style="left:322.3px;top:538.8px;font-size:5.90px;letter-spacing:0.08px;">-1055.109</span>
<span class="t s1" style="left:359.0px;top:538.8px;font-size:5.90px;letter-spacing:0.35px;">Z:</span>
<div class="a sunk cf" style="left:365px;top:536.3px;width:30.5px;height:11px"></div>
<span class="t s2" style="left:366.6px;top:538.8px;font-size:5.90px;letter-spacing:0.20px;">0.0</span>
<!-- grid / time tag -->
<div class="a" style="box-sizing:border-box;left:404px;top:536px;width:54.5px;height:12px;border:1px solid;border-color:#999 #e8e8e8 #e8e8e8 #999"></div>
<span class="t s1" style="left:407.5px;top:539.6px;font-size:5.90px;letter-spacing:-0.06px;">Grid = 100.0</span>
<div class="a" style="box-sizing:border-box;left:404px;top:549.5px;width:54.5px;height:11px;border:1px solid;border-color:#999 #e8e8e8 #e8e8e8 #999"></div>
<span class="t s1" style="left:407.5px;top:552.8px;font-size:5.90px;letter-spacing:0.14px;">Add Time Tag</span>
<!-- key button -->
<div class="a btn" style="left:460px;top:535.5px;width:23px;height:25px;border-color:#ececec #8c8c8c #8c8c8c #ececec"></div>
<div class="a btn" style="left:484.5px;top:535px;width:27.5px;height:12.5px;border-color:#ececec #8c8c8c #8c8c8c #ececec"></div>
<span class="t s1" style="left:487.0px;top:538.6px;font-size:5.90px;letter-spacing:-0.14px;">Auto Key</span>
<div class="a btn" style="left:484.5px;top:548px;width:27.5px;height:12.5px;border-color:#ececec #8c8c8c #8c8c8c #ececec"></div>
<span class="t s1" style="left:488.6px;top:551.8px;font-size:5.90px;letter-spacing:-0.01px;">Set Key</span>
<div class="a sunk dd" style="left:513.5px;top:536.3px;width:62px;height:10.7px"></div>
<span class="t s1" style="left:515.7px;top:538.8px;font-size:5.90px;letter-spacing:-0.04px;">Selected</span>
<div class="a btn ddb" style="left:567.5px;top:537.3px;width:6.8px;height:8.7px"></div>
<div class="a btn" style="left:513.5px;top:548px;width:62px;height:12.5px;border-color:#ececec #8c8c8c #8c8c8c #ececec"></div>
<span class="t s1" style="left:530.0px;top:551.8px;font-size:5.90px;letter-spacing:-0.21px;">Key Filters...</span>
<div id="ff" class="a sunk" style="left:593.5px;top:549px;width:35.5px;height:9.5px;background:#dcdcdc;border-color:#444 #f4f4f4 #f4f4f4 #444"></div>
<span class="t s2" style="left:596.2px;top:550.3px;font-size:7.19px;">0</span>
<svg id="sti" class="a" style="left:0;top:534px" width="700" height="26" viewBox="0 534 700 26">
<!-- lock -->
<rect x="243.4" y="541" width="5.2" height="3.6" fill="#222"/><path d="M244.6 541v-1.2a1.4 1.4 0 0 1 2.8 0V541" fill="none" stroke="#222" stroke-width="0.9"/>
<!-- abs/offset box -->
<rect x="256.4" y="537.2" width="8.4" height="8.6" fill="#dcdcdc" stroke="#222" stroke-width="0.9"/><circle cx="260.6" cy="541.5" r="1.5" fill="#111"/><path d="M260.6 538.6v5.8M257.8 541.5h5.6" stroke="#222" stroke-width="0.45"/>
<!-- key -->
<circle cx="467.2" cy="548" r="2.4" fill="none" stroke="#000" stroke-width="1.3"/><path d="M469.6 548h9M475 548v2.2M477.6 548v2.2" stroke="#000" stroke-width="1.3" fill="none"/>
<!-- playback -->
<path d="M576 537v22" stroke="#9a9a9a" stroke-width="0.8"/><path d="M577 537v22" stroke="#e8e8e8" stroke-width="0.8"/>
<g fill="#000">
<path d="M581.4 538.6h1.2v5h-1.2zM586 538.6v5l-3.2-2.5zM589.4 538.6v5l-3.2-2.5z"/>
<path d="M600 538.8v4.6l-3.6-2.3zM600.8 538.8h1.1v4.6h-1.1zM602.8 538.8h1.1v4.6h-1.1z"/>
<path d="M611 538.6v5l3.8-2.5z"/>
<path d="M621.2 538.8h1.1v4.6h-1.1zM623.2 538.8h1.1v4.6h-1.1zM625 538.8v4.6l3.6-2.3z"/>
<path d="M635 538.6v5l3.2-2.5zM638.4 538.6v5l3.2-2.5zM642 538.6h1.2v5h-1.2z"/>
<path d="M582.2 551.4h1v4h-1zM588 551.4h1v4h-1zM583.4 553.4l2-1.6v3.2zM587.8 553.4l-2-1.6v3.2z"/>
</g>
<rect x="608.2" y="537" width="8.6" height="8" fill="none" stroke="#000" stroke-width="1.1"/><rect x="617.4" y="545.6" width="1" height="1" fill="#222"/>
<path d="M648.2 537v22" stroke="#9a9a9a" stroke-width="0.8"/><path d="M649.2 537v22" stroke="#e8e8e8" stroke-width="0.8"/>
<!-- time config -->
<rect x="638.2" y="550" width="5.6" height="6" fill="#d8c8c8" stroke="#703030" stroke-width="0.8"/><path d="M638.2 551.4h5.6" stroke="#703030" stroke-width="1"/><circle cx="643.6" cy="555" r="2" fill="#e8d0d0" stroke="#a03030" stroke-width="0.7"/>
<!-- spinner -->
<path d="M630.6 552l1.5-2 1.5 2zM630.6 554.6l1.5 2 1.5-2z" fill="#000"/>
<!-- nav: zoom -->
<circle cx="654.6" cy="539.8" r="2.4" fill="#e8f0f8" stroke="#2a2a8a" stroke-width="0.9"/><path d="M656.4 541.8l2.6 3" stroke="#2a2a8a" stroke-width="1.4"/>
<!-- zoom all -->
<g id="za"><rect x="665" y="537.4" width="6.8" height="5.6" fill="none" stroke="#b02828" stroke-width="0.9"/><path d="M668.4 537.4v5.6M665 540.2h6.8" stroke="#b02828" stroke-width="0.7"/><circle cx="666" cy="542.6" r="1.8" fill="#e8e8f4" stroke="#2a2a8a" stroke-width="0.7"/><path d="M667.2 544l1.6 1.6" stroke="#2a2a8a" stroke-width="1"/></g>
<!-- zoom extents -->
<path d="M677.4 538.4h5.4v5.4h-5.4z" fill="#d8dcf0" stroke="#3a3a9a" stroke-width="0.9"/><path d="M676 537l2 2M684.4 537l-2 2M676 545l2-2M684.4 545.2l-2-2" stroke="#2a2a8a" stroke-width="1"/><rect x="685.4" y="545.6" width="1" height="1" fill="#222"/>
<!-- zoom ext all -->
<rect x="690.6" y="537.2" width="7" height="5.6" fill="none" stroke="#b02828" stroke-width="0.9"/><path d="M694 537.2v5.6M690.6 540h7" stroke="#b02828" stroke-width="0.7"/><rect x="689" y="541" width="4.4" height="4" fill="#d8dcf0" stroke="#3a3a9a" stroke-width="0.8"/>
<!-- fov -->
<path d="M652 550.4l6.6 3.2-6.6 3.4" fill="none" stroke="#111" stroke-width="1.1"/><path d="M655 551.6a3 3 0 0 1 0 4" fill="none" stroke="#111" stroke-width="0.7"/><rect x="659.4" y="558" width="1" height="1" fill="#222"/>
<!-- pan -->
<path d="M665 554.6c-1-2 0-2.6 1-1.4v-2.4c0-1 1.2-1 1.2 0v-0.8c0-1 1.2-1 1.2 0v0.6c0-1 1.2-1 1.2 0v1c0-0.8 1.2-0.8 1.2 0v3.4c0 1.6-1 2.6-2.4 2.6h-1.4c-1 0-1.4-1-2.2-3z" fill="#f0f0f0" stroke="#222" stroke-width="0.6"/><rect x="672.4" y="558" width="1" height="1" fill="#222"/>
<!-- arc rotate -->
<circle cx="680.4" cy="554" r="2.6" fill="none" stroke="#2a2a8a" stroke-width="0.8"/><path d="M680.4 549.6v8.8M676 554h8.8" stroke="#2a2a8a" stroke-width="0.7"/><path d="M680.4 550l-1.4 2.4h2.8z" fill="#d8d040" stroke="#555" stroke-width="0.3"/><rect x="685.4" y="558" width="1" height="1" fill="#222"/>
<!-- min max -->
<rect x="690" y="550" width="5" height="4.6" fill="#d0d4f0" stroke="#2a2a8a" stroke-width="0.9"/><rect x="692.6" y="553" width="4.4" height="4" fill="#c6c6c6" stroke="#2a2a8a" stroke-width="0.9"/><path d="M694 554.4l2 2" stroke="#111" stroke-width="0.7"/>
</svg>
<svg id="red" class="a" style="left:0;top:528px" width="200" height="32" viewBox="0 528 200 32">
  <defs><clipPath id="rc"><text transform="scale(1.05,0.97)" x="7.68 19.23 39.41 49.97 63.58 84.23 105.90 126.08 135.90 157.44" y="575.4" font-family="Liberation Sans, sans-serif" font-weight="bold" font-size="29.8" stroke="#000" stroke-width="2">laironaldo</text></clipPath></defs>
  <text transform="scale(1.05,0.97)" x="7.68 19.23 39.41 49.97 63.58 84.23 105.90 126.08 135.90 157.44" y="575.4" font-family="Liberation Sans, sans-serif" font-weight="bold" font-size="29.8" fill="#e4000c" stroke="#e4000c" stroke-width="2" stroke-linejoin="round">laironaldo</text>
  <g clip-path="url(#rc)" font-family="Liberation Sans, sans-serif" font-size="5.9" fill="#4a0000" opacity="0.8">
    <text x="62" y="543.8" letter-spacing="0.02">None Selected</text>
    <text x="62" y="557.8" letter-spacing="-0.07" xml:space="preserve">Rendering Time&#160; 0:00:01</text>
  </g>
</svg>
</body>
</html>
